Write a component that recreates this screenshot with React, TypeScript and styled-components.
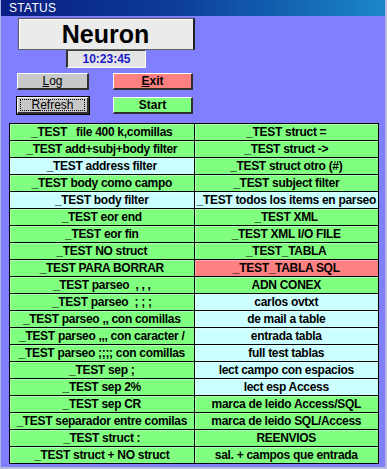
import React from "react";
import styled, { createGlobalStyle } from "styled-components";

const GlobalStyle = createGlobalStyle`
  html, body {
    margin: 0;
    padding: 0;
    background: #8080ff;
  }
  * { box-sizing: border-box; }
`;

const Window = styled.div`
  width: 387px;
  height: 469px;
  display: flex;
  flex-direction: column;
  background: #8080ff;
  border-left: 1px solid #a8b4e8;
  border-right: 2px solid #b8bcd8;
  border-bottom: 2px solid #b8bcd8;
  font-family: "Liberation Sans", Arial, sans-serif;
  overflow: hidden;
`;

const TitleBar = styled.div`
  height: 16px;
  flex: none;
  display: flex;
  align-items: center;
  padding-left: 8px;
  background: linear-gradient(90deg, #0a1e84 0%, #0c3c98 45%, #1a86c8 100%);
  color: #ffffff;
  font-size: 12px;
  letter-spacing: 0.3px;
`;

const Header = styled.div`
  padding: 2px 0 0 16px;
  width: 194px;
  display: flex;
  flex-direction: column;
  align-items: center;
`;

const NameBox = styled.div`
  width: 177px;
  height: 32px;
  display: flex;
  align-items: center;
  justify-content: center;
  background: #ebebeb;
  border-top: 1px solid #5a5a5a;
  border-left: 1px solid #5a5a5a;
  border-right: 2px solid #202020;
  border-bottom: 1px solid #606060;
  box-shadow: inset 1px 1px 0 #ffffff;
  font-size: 25px;
  font-weight: bold;
  color: #000000;
`;

const Clock = styled.div`
  width: 80px;
  height: 18px;
  display: flex;
  align-items: center;
  justify-content: center;
  background: #e4e4e4;
  border-top: 1px solid #404040;
  border-left: 2px solid #303030;
  border-right: 1px solid #ffffff;
  border-bottom: 1px solid #ffffff;
  font-size: 12px;
  font-weight: bold;
  color: #1a1acc;
`;

const ButtonGrid = styled.div`
  display: grid;
  grid-template-columns: 72px 80px;
  column-gap: 24px;
  row-gap: 7px;
  padding: 5px 0 0 16px;
`;

const Btn = styled.div<{ $bg: string; $bold?: boolean; $focus?: boolean }>`
  height: 17px;
  position: relative;
  display: flex;
  align-items: center;
  justify-content: center;
  background: ${(p) => p.$bg};
  border-top: 1px solid #ffffff;
  border-left: 1px solid #ffffff;
  border-right: 2px solid #303030;
  border-bottom: 2px solid #303030;
  outline: ${(p) => (p.$focus ? "1px solid #000000" : "none")};
  font-size: 12px;
  font-weight: ${(p) => (p.$bold ? "bold" : "normal")};
  color: #000000;
  u { text-decoration: underline; }
`;

const FocusRing = styled.span`
  position: absolute;
  inset: 1px 2px 1px 2px;
  border: 1px dotted #000000;
`;

const List = styled.div`
  margin: 9px 0 0 8px;
  width: 370px;
  display: grid;
  grid-template-columns: 1fr 1fr;
  grid-auto-flow: column;
  grid-template-rows: repeat(20, 16px);
  gap: 1px;
  padding: 1px;
  background: #000000;
`;

const Item = styled.div<{ $bg: string }>`
  display: flex;
  align-items: center;
  justify-content: center;
  background: ${(p) => p.$bg};
  white-space: pre;
  overflow: hidden;
  font-size: 12px;
  letter-spacing: -0.3px;
  font-weight: bold;
  color: #000000;
  box-shadow: inset 1px 1px 0 rgba(255, 255, 255, 0.35);
`;

const G = "#80ff80";
const C = "#ccffff";
const R = "#ff8080";

const left: [string, string][] = [
  ["_TEST   file 400 k,comillas", G],
  ["_TEST add+subj+body filter", G],
  ["_TEST address filter", C],
  ["_TEST body como campo", G],
  ["_TEST body filter", C],
  ["_TEST eor end", G],
  ["_TEST eor fin", G],
  ["_TEST NO struct", G],
  ["_TEST PARA BORRAR", G],
  ["_TEST parseo  , , ,", G],
  ["_TEST parseo  ; ; ;", G],
  ["_TEST parseo ,, con comillas", G],
  ["_TEST parseo ,,, con caracter /", G],
  ["_TEST parseo ;;;; con comillas", G],
  ["_TEST sep ;", G],
  ["_TEST sep 2%", G],
  ["_TEST sep CR", G],
  ["_TEST separador entre comilas", G],
  ["_TEST struct :", G],
  ["_TEST struct + NO struct", G],
];

const right: [string, string][] = [
  ["_TEST struct =", G],
  ["_TEST struct ->", G],
  ["_TEST struct otro (#)", G],
  ["_TEST subject filter", G],
  ["_TEST todos los items en parseo", C],
  ["_TEST XML", G],
  ["_TEST XML I/O FILE", G],
  ["_TEST_TABLA", G],
  ["_TEST_TABLA SQL", R],
  ["ADN CONEX", G],
  ["carlos ovtxt", C],
  ["de mail a table", C],
  ["entrada tabla", C],
  ["full test tablas", C],
  ["lect campo con espacios", C],
  ["lect esp Access", C],
  ["marca de leido Access/SQL", G],
  ["marca de leido SQL/Access", G],
  ["REENVIOS", G],
  ["sal. + campos que entrada", G],
];

export default function App() {
  return (
    <>
      <GlobalStyle />
      <Window>
        <TitleBar>STATUS</TitleBar>
        <Header>
          <NameBox>Neuron</NameBox>
          <Clock>10:23:45</Clock>
        </Header>
        <ButtonGrid>
          <Btn $bg="#c8c8c8">
            <span><u>L</u>og</span>
          </Btn>
          <Btn $bg="#ff8080" $bold>
            <span><u>E</u>xit</span>
          </Btn>
          <Btn $bg="#c8c8c8" $focus>
            <FocusRing />
            <span><u>R</u>efresh</span>
          </Btn>
          <Btn $bg="#80ff80" $bold>
            <span>Start</span>
          </Btn>
        </ButtonGrid>
        <List>
          {[...left, ...right].map(([label, bg], i) => (
            <Item key={i} $bg={bg}>
              {label}
            </Item>
          ))}
        </List>
      </Window>
    </>
  );
}
